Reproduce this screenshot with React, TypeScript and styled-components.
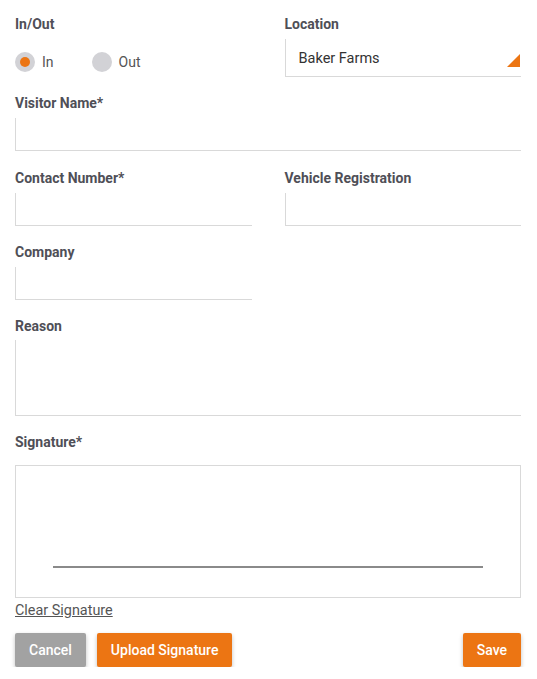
import React, { useState } from 'react';
import styled, { createGlobalStyle } from 'styled-components';

const orange = '#ec7513';
const labelColor = '#4f4f57';
const lineColor = '#d9d9d9';

const GlobalStyle = createGlobalStyle`
  body {
    margin: 0;
    background: #fff;
    font-family: Roboto, 'Liberation Sans', sans-serif;
    color: #333;
  }
`;

const Form = styled.form`
  width: 506px;
  padding: 16px 0 0 15px;
  display: flex;
  flex-direction: column;
`;

const Row = styled.div<{ $gap?: number }>`
  display: grid;
  grid-template-columns: 1fr 1fr;
  column-gap: 33px;
  margin-bottom: ${p => p.$gap ?? 18}px;
`;

const Field = styled.div<{ $gap?: number }>`
  display: flex;
  flex-direction: column;
  margin-bottom: ${p => p.$gap ?? 0}px;
`;

const Label = styled.label<{ $space?: number }>`
  font-size: 14px;
  font-weight: 700;
  line-height: 16px;
  color: ${labelColor};
  margin-bottom: ${p => p.$space ?? 7}px;
`;

const TextInput = styled.input`
  box-sizing: border-box;
  height: 33px;
  border: none;
  border-left: 1px solid ${lineColor};
  border-bottom: 1px solid ${lineColor};
  outline: none;
  padding: 0 12px;
  font: inherit;
  font-size: 15px;
  background: transparent;
`;

const TextArea = styled.textarea`
  box-sizing: border-box;
  height: 76px;
  border: none;
  border-left: 1px solid ${lineColor};
  border-bottom: 1px solid ${lineColor};
  outline: none;
  resize: none;
  padding: 8px 12px;
  font: inherit;
  font-size: 15px;
`;

const Select = styled.div`
  position: relative;
  box-sizing: border-box;
  height: 38px;
  border-left: 1px solid ${lineColor};
  border-bottom: 1px solid ${lineColor};
  display: flex;
  align-items: center;
  padding: 2px 0 0 13px;
  font-size: 14.5px;
  color: #333;
`;

const Corner = styled.span`
  position: absolute;
  right: 1px;
  bottom: 9px;
  width: 0;
  height: 0;
  border-left: 13px solid transparent;
  border-bottom: 13px solid ${orange};
`;

const RadioGroup = styled.div`
  display: flex;
  align-items: center;
  gap: 38px;
  height: 38px;
  padding-top: 8px;
  box-sizing: border-box;
`;

const RadioOption = styled.label`
  display: flex;
  align-items: center;
  gap: 7px;
  font-size: 14px;
  color: #555;
  cursor: pointer;
`;

const RadioDot = styled.span<{ $on: boolean }>`
  width: 20px;
  height: 20px;
  border-radius: 50%;
  background: #d2d2d6;
  display: flex;
  align-items: center;
  justify-content: center;
  &::after {
    content: '';
    width: 10px;
    height: 10px;
    border-radius: 50%;
    background: ${p => (p.$on ? orange : 'transparent')};
  }
`;

const SignatureBox = styled.div`
  box-sizing: border-box;
  height: 133px;
  border: 1px solid ${lineColor};
  display: flex;
  align-items: flex-end;
  justify-content: center;
  padding-bottom: 29px;
`;

const SignLine = styled.div`
  width: 430px;
  height: 2px;
  background: #8a8a8a;
`;

const ClearLink = styled.a`
  margin-top: 5px;
  font-size: 14.4px;
  line-height: 16px;
  color: #555;
  text-decoration: underline;
  align-self: flex-start;
  cursor: pointer;
`;

const Actions = styled.div`
  display: flex;
  align-items: center;
  gap: 11px;
  margin-top: 14px;
`;

const Button = styled.button<{ $tone?: 'grey' | 'orange' }>`
  height: 34px;
  padding: 0 14px;
  border: none;
  border-radius: 2px;
  font-family: inherit;
  font-size: 14px;
  font-weight: 500;
  color: #fff;
  background: ${p => (p.$tone === 'grey' ? '#a2a2a2' : orange)};
  box-shadow: 0 2px 4px rgba(0, 0, 0, 0.25);
  cursor: pointer;
`;

const Spacer = styled.div`
  flex: 1;
`;

export default function App() {
  const [dir, setDir] = useState<'in' | 'out'>('in');

  return (
    <>
      <GlobalStyle />
      <Form onSubmit={e => e.preventDefault()}>
        <Row>
          <Field>
            <Label>In/Out</Label>
            <RadioGroup>
              <RadioOption onClick={() => setDir('in')}>
                <RadioDot $on={dir === 'in'} />
                In
              </RadioOption>
              <RadioOption onClick={() => setDir('out')}>
                <RadioDot $on={dir === 'out'} />
                Out
              </RadioOption>
            </RadioGroup>
          </Field>
          <Field>
            <Label>Location</Label>
            <Select>
              Baker Farms
              <Corner />
            </Select>
          </Field>
        </Row>

        <Field $gap={19}>
          <Label>Visitor Name*</Label>
          <TextInput />
        </Field>

        <Row>
          <Field>
            <Label>Contact Number*</Label>
            <TextInput />
          </Field>
          <Field>
            <Label>Vehicle Registration</Label>
            <TextInput />
          </Field>
        </Row>

        <Row>
          <Field>
            <Label>Company</Label>
            <TextInput />
          </Field>
        </Row>

        <Field $gap={18}>
          <Label $space={6}>Reason</Label>
          <TextArea />
        </Field>

        <Field>
          <Label $space={15}>Signature*</Label>
          <SignatureBox>
            <SignLine />
          </SignatureBox>
        </Field>

        <ClearLink>Clear Signature</ClearLink>

        <Actions>
          <Button type="button" $tone="grey">Cancel</Button>
          <Button type="button">Upload Signature</Button>
          <Spacer />
          <Button type="submit">Save</Button>
        </Actions>
      </Form>
    </>
  );
}
